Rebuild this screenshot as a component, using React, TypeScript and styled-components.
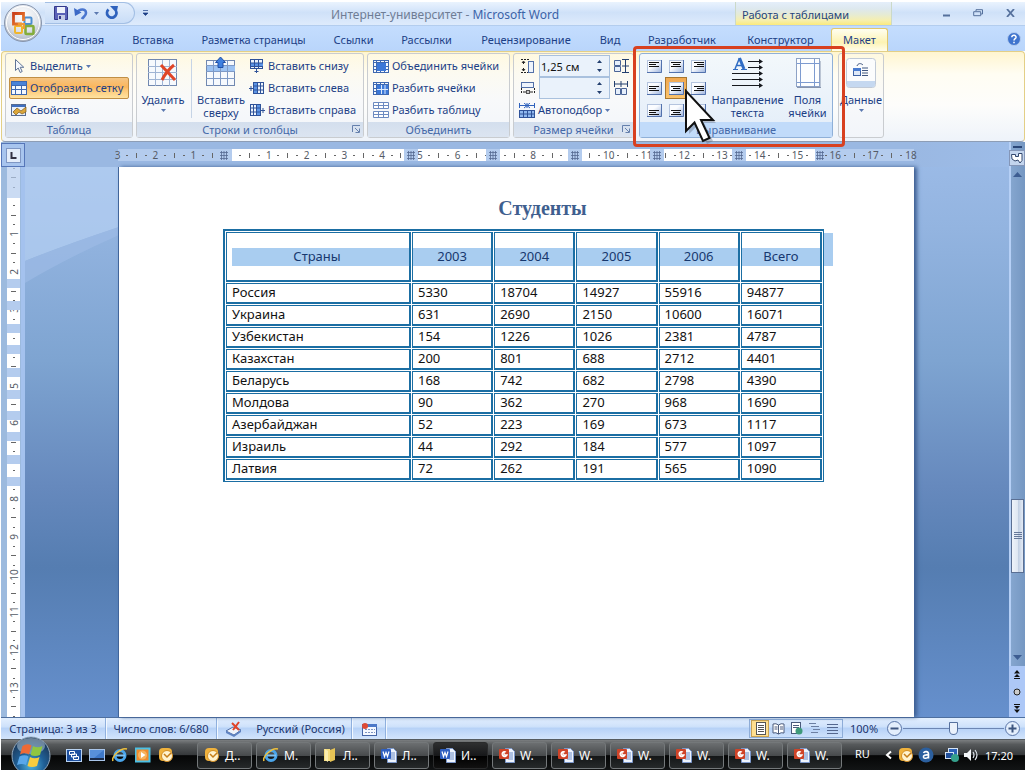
import React from "react";
import styled, { createGlobalStyle, css } from "styled-components";

const ink = "#1c3f86";
const tableLine = "#1b6ea3";
const rulerBlue = "#b4ccee";

const Global = createGlobalStyle`
  * { box-sizing: border-box; }
  body { margin: 0; background: #fff; }
  body, button, input { font-family: "Noto Sans", "Open Sans", sans-serif; font-size: 12px; }
  button { border: 0; background: none; padding: 0; margin: 0; color: inherit; }
  svg { display: block; flex: none; }
`;

/* ---------- frame ---------- */
const Window = styled.div`
  min-height: 100vh; display: flex; flex-direction: column;
  padding: 2px 1px 0; color: ${ink}; overflow: hidden;
`;
const Header = styled.header`position: relative; background: #bfdbff;`;
const TitleBar = styled.div`
  display: flex; height: 24px; padding-left: 44px;
  background: linear-gradient(#eaf3fe 0, #d9e8fb 30%, #cfe1f8 45%, #deebfc 100%);
  border-bottom: 1px solid #b3cdee;
`;
const OfficeButton = styled.button`position: absolute; left: 2px; top: 1px; width: 40px; height: 40px; z-index: 2;`;
const QuickAccess = styled.div`
  display: flex; align-items: center; gap: 6px; width: 90px; height: 22px; padding-left: 9px;
  border: 1px solid #a3bfe4; border-left: 0; border-radius: 0 11px 11px 0;
  background: linear-gradient(#e3eefc, #c9ddf7);
`;
const More = styled.button`width: 20px; height: 22px; display: flex; align-items: center; justify-content: center;`;
const Title = styled.h1`
  flex: 1; margin: 0; text-align: center; font-size: 12px; font-weight: 400; line-height: 26px; color: #3b63a8;
  span { color: #6f7d95; }
`;
const ContextLabel = styled.div`
  width: 157px; line-height: 26px; padding-left: 6px; font-size: 11px; color: #26457c; white-space: nowrap;
  border: solid #cbd9c8; border-width: 0 1px;
  background: linear-gradient(#e4eefa 0, #dde8ee 30%, #e6ebd4 55%, #f6efae 80%, #fbea7c 100%);
`;
const WindowButtons = styled.div`
  display: flex; width: 133px; justify-content: flex-end; padding-right: 5px; gap: 12px;
  button { width: 20px; height: 22px; display: flex; align-items: center; justify-content: center; }
`;
const Tabs = styled.nav`
  display: flex; align-items: flex-end; height: 25px; padding-left: 46px;
  background: linear-gradient(#c4ddfe, #b9d5fb);
`;
const Tab = styled.button<{ $w: number; $active?: boolean }>`
  width: ${p => p.$w}px; height: 23px; line-height: 22px; font-size: 11px; white-space: nowrap; flex: none;
  ${p => p.$active && css`
    margin-left: 1px; border: 1px solid #e0c76c; border-bottom: 0; border-radius: 3px 3px 0 0;
    background: linear-gradient(#fffef0, #fdf3b4 60%, #fffdec);
  `}
`;
const Help = styled.button`margin-left: auto; width: 16px; height: 16px; margin-right: 3px; margin-bottom: 4px;`;

/* ---------- ribbon ---------- */
const Ribbon = styled.div`
  display: flex; gap: 3px; height: 91px; padding: 1px 3px 3px;
  border: 1px solid #e3cf86; border-bottom-color: #8d9db5; border-radius: 4px;
  background: linear-gradient(#fff5cf 0, #fffdf3 25%, #fdfdfb 60%, #eef3fa 100%);
`;
const GroupBox = styled.section<{ $w: number; $hot?: boolean; $lead?: boolean }>`
  position: relative; display: flex; flex-direction: column; flex: none; width: ${p => p.$w}px;
  border: 1px solid ${p => (p.$hot ? "#8fb0d8" : "#c9ccd0")}; border-radius: 3px;
  margin-left: ${p => (p.$lead ? 2 : 0)}px;
  background: ${p => (p.$hot ? "linear-gradient(#f3f8fb, #e3edf9)" : "linear-gradient(rgba(255,250,230,.7), #f8f9fa 55%, #f2f5fa)")};
`;
const GroupBody = styled.div`display: flex; flex: 1; padding: 1px 3px 0; min-height: 0;`;
const Caption = styled.h2<{ $hot?: boolean }>`
  position: relative; margin: 0; height: 15px; line-height: 16px; text-align: center; font-size: 11px; font-weight: 400; color: #4468a8;
  background: ${p => (p.$hot ? "#c1dbfa" : "linear-gradient(#d3deed, #dce5f1)")};
`;
const Launcher = styled.button`position: absolute; right: 2px; top: 3px; width: 9px; height: 9px;`;
const Rows = styled.div<{ $grow?: boolean }>`display: flex; flex-direction: column; flex: ${p => (p.$grow ? 1 : "none")};`;
const SmallButton = styled.button<{ $on?: boolean }>`
  display: flex; align-items: center; gap: 3px; height: 22px; padding: 0 2px; font-size: 11px; line-height: 20px; white-space: nowrap;
  ${p => p.$on && css`
    border: 1px solid #c08f45; border-radius: 2px; padding: 0 1px;
    background: linear-gradient(#f5c584 0, #fbb65c 45%, #fdc878 60%, #ffe3a0 100%);
  `}
`;
const BigButton = styled.button<{ $w: number }>`
  width: ${p => p.$w}px; height: 66px; flex: none; display: flex; flex-direction: column; align-items: center;
  font-size: 11px; line-height: 13px; gap: 3px; padding-top: 1px; white-space: nowrap;
  > svg + span { display: flex; flex-direction: column; align-items: center; }
`;
const Divider = styled.i`width: 1px; margin: 4px 3px 4px 5px; background: #c6d4e6;`;
const Spinner = styled.label`
  display: flex; width: 71px; height: 22px; border: 1px solid #a9c1de; background: #eaf2fb; align-items: center;
  input { width: 52px; border: 0; background: none; padding: 0 0 0 1px; color: #111; font-size: 11px; height: 20px; outline: 0; }
`;
const SizeRow = styled.div`display: flex; align-items: center; gap: 3px; height: 22px; padding-left: 3px;`;
const AlignGrid = styled.div`display: grid; grid-template-columns: repeat(3, 22px); grid-auto-rows: 22px; flex: none;`;
const AlignButton = styled.button<{ $on?: boolean }>`
  display: flex; align-items: center; justify-content: center;
  ${p => p.$on && css`border: 1px solid #a8772f; background: linear-gradient(#f0a850, #fbc36b);`}
`;
const Callout = styled.div`
  position: absolute; z-index: 3; left: -7px; right: -13px; top: -8px; bottom: -10px;
  border: 3px solid #d8401f; border-radius: 4px; pointer-events: none;
`;
const Pointer = styled.svg`position: absolute; z-index: 4; left: 44px; top: 34px; pointer-events: none;`;

/* ---------- document ---------- */
const Workspace = styled.main`display: flex; flex: 1; background: #9dbce6; border-bottom: 1px solid #4e6f9f;`;
const LeftRail = styled.div`width: 24px; display: flex; flex-direction: column; background: linear-gradient(90deg, #9cbade 20px, #a4c2ee 20px);`;
const TabStop = styled.button`
  height: 24px; margin-top: 1px; border: 1px solid #5576b8; background: #a8c5ee; flex: none;
  display: flex; align-items: center; justify-content: center;
`;
const VRuler = styled.div`position: relative; flex: 1; width: 13px; margin-left: 6px; background: #fff; overflow: hidden;`;
const VScale = styled.div`position: absolute; inset: -13px 0 -4px; display: flex; flex-direction: column;`;
const HRulerBar = styled.div`
  display: flex; justify-content: center; height: 25px; padding: 7px 2px 0 0;
  background: linear-gradient(90deg, #9ab8e2 90%, #9dbce8);
`;
const HRuler = styled.div`position: relative; width: 796px; height: 12px; background: #fff;`;
const HScale = styled.div`position: relative; display: flex; margin: 0 -2px 0 -5px;`;
const Unit = styled.div<{ $v?: boolean; $end?: boolean }>`
  flex: ${p => (p.$end ? "0 0 10px" : "1 1 0")}; min-width: 0; display: flex; flex-direction: ${p => (p.$v ? "column" : "row")};
  font-size: 10px; line-height: 12px; color: #555b66;
  > span { flex: 1 1 0; min-width: 0; min-height: 0; display: flex; align-items: center; justify-content: center; }
  b { font-weight: 400; white-space: nowrap; ${p => p.$v && "transform: rotate(-90deg);"} }
  i { background: #666; }
  .dot { width: 2px; height: 1px; }
  .bar { ${p => (p.$v ? "width: 5px; height: 1px;" : "width: 1px; height: 5px;")} }
`;
const Zone = styled.div`position: absolute; background: ${rulerBlue}; display: flex; align-items: center; justify-content: center;`;
const Desk = styled.div`
  position: relative; flex: 1; min-width: 0; display: flex; flex-direction: column;
  background: linear-gradient(#9dbce8 0, #93b4e0 15%, #7ea4d1 38%, #6689bd 60%, #557db1 74%, #6690cd 100%);
`;
const Sweep = styled.svg`position: absolute; left: 0; top: 25px;`;
const PageRow = styled.div`position: relative; flex: 1; display: flex; justify-content: center; padding-right: 2px;`;
const Page = styled.article`
  width: 796px; background: #fff; padding: 30px 90px 40px 104px; border-left: 1px solid #41659b;
  box-shadow: 3px 0 4px #3e5f92;
`;
const Heading = styled.h2`
  margin: 0 0 10px; padding-left: 38px; text-align: center; height: 22px;
  font: 700 20px/22px "Liberation Serif", serif; color: #3f5f8f;
`;
const TableWrap = styled.div`position: relative; width: 601px;`;
const Data = styled.table`
  width: 100%; table-layout: fixed; border-collapse: separate; border-spacing: 1px;
  border: 2px solid ${tableLine}; border-right-width: 1px; border-bottom-width: 1px;
  font-size: 13px; color: #111;
  th, td { border: 1px solid ${tableLine}; border-right-width: 2px; border-bottom-width: 2px; padding: 0; font-weight: 400; }
  th { height: 50px; color: #17386e; }
  th span { display: block; height: 18px; line-height: 17px; background: #a9cdf0; }
  th:first-child span { margin-left: 5px; padding-right: 7px; }
  td { height: 21px; line-height: 17px; padding-left: 5px; padding-bottom: 1px; text-align: left; }
  col:first-child { width: 185px; }
`;
const RowEndMark = styled.div`position: absolute; left: 601px; top: 4px; width: 9px; height: 33px; background: #a9cdf0;`;

const ScrollRail = styled.aside`
  width: 16px; display: flex; flex-direction: column; background: linear-gradient(90deg, #b6d0f6 2px, #85a6cf 2px, #7597c2);
  padding-top: 4px;
`;
const Split = styled.i`height: 2px; width: 9px; background: #2b4778; margin: 0 4px 2px;`;
const RulerToggle = styled.button`height: 16px; background: #c3d5ee; border: 1px solid #8496b8; display: flex; align-items: center; justify-content: center;`;
const Arrow = styled.button`height: 17px; display: flex; align-items: center; justify-content: center;`;
const Track = styled.i<{ $f: number }>`flex: ${p => p.$f} 0 0;`;
const Thumb = styled.div`
  height: 74px; margin: 0 1px 0 2px; border: 1px solid #5a6f93; background: linear-gradient(90deg, #eef3fa, #dfe7f2 50%, #c0cee2 55%, #e4ebf5);
  display: flex; align-items: center; justify-content: center;
`;
const Browse = styled.div`
  height: 51px; background: #adc8f7; display: flex; flex-direction: column; justify-content: space-around; align-items: center;
  button { width: 15px; height: 15px; display: flex; align-items: center; justify-content: center; }
`;

/* ---------- status bar ---------- */
const Status = styled.footer`
  display: flex; align-items: center; height: 21px; font-size: 11px; color: #20356e; white-space: nowrap;
  background: linear-gradient(#e3effe 0, #cfe2fb 40%, #b7d2f7 50%, #d2e4fc 100%);
`;
const StatusItem = styled.button<{ $w: number; $line?: boolean }>`
  width: ${p => p.$w}px; height: 21px; display: flex; align-items: center; justify-content: center; font-size: 11px;
  ${p => p.$line && "border-right: 1px solid #8fb0de; box-shadow: 1px 0 #f2f8ff;"}
`;
const Views = styled.div`
  display: flex; margin-left: auto; width: 94px; height: 19px; border: 1px solid #8eadd8; padding: 0 1px;
  button { width: 18px; height: 17px; display: flex; align-items: center; justify-content: center; }
  button:first-child { background: #ffdf90; border: 1px solid #c9a252; }
`;
const ZoomBox = styled.div`
  display: flex; align-items: center; width: 182px; padding-left: 7px;
  span { width: 36px; }
  input {
    appearance: none; width: 101px; height: 18px; margin: 0; background: linear-gradient(#6d86b3, #6d86b3) center / 100% 1px no-repeat;
  }
  input::-webkit-slider-thumb {
    appearance: none; width: 9px; height: 13px; border: 1px solid #56719f; background: #eaf1fb;
    border-radius: 1px 1px 5px 5px;
  }
`;
const RoundButton = styled.button`width: 17px; height: 17px;`;

/* ---------- taskbar ---------- */
const Taskbar = styled.footer`
  position: relative; display: flex; align-items: center; height: 31px; padding-left: 65px; color: #fff;
  background: linear-gradient(#7b7e80 0, #56595b 15%, #35383a 50%, #050606 52%, #121415 100%);
  border-top: 1px solid #555b60;
`;
const Orb = styled.button`position: absolute; left: 9px; top: -4px; width: 42px; height: 34px; overflow: hidden;`;
const Launch = styled.div`display: flex; gap: 7px; width: 131px; button { width: 16px; height: 16px; }`;
const TaskList = styled.div`display: flex; gap: 4px;`;
const Task = styled.button<{ $on?: boolean }>`
  display: flex; align-items: center; gap: 5px; width: 55px; height: 27px; padding-left: 6px; font-size: 12px; white-space: nowrap;
  border: 1px solid ${p => (p.$on ? "#2a2b2c" : "#74787a")}; border-radius: 3px;
  background: ${p => (p.$on
    ? "linear-gradient(#2e2f30, #17181a 50%, #000 52%, #111)"
    : "linear-gradient(#6c6f71, #484b4d 50%, #141617 52%, #26292a)")};
`;
const Tray = styled.div`
  display: flex; align-items: center; margin-left: auto; padding-right: 12px; white-space: nowrap; font-size: 11px;
  span, time, button { flex: none; }
`;
const TrayIcon = styled.button<{ $ml: number }>`margin-left: ${p => p.$ml}px; width: 16px; height: 16px;`;
const Lang = styled.span`padding-bottom: 4px;`;
const Clock = styled.time`margin-left: 6px;`;

/* ---------- drawings ---------- */
const Caret = ({ c = "#5c79b0" }) => <svg width="5" height="3"><path d="M0 0h5L2.5 3z" fill={c} /></svg>;

const Grid = ({ w = 15, h = 14, cols = 3, rows = 3, fill = "#f4f8fd", line = "#3e68b0", children }: any) => (
  <svg width={w} height={h}>
    <rect x=".5" y=".5" width={w - 1} height={h - 1} fill={fill} stroke={line} />
    {Array.from({ length: cols - 1 }, (_, i) => <path key={"c" + i} d={`M${Math.round(((i + 1) * w) / cols) - 0.5} 0V${h}`} stroke={line} />)}
    {Array.from({ length: rows - 1 }, (_, i) => <path key={"r" + i} d={`M0 ${Math.round(((i + 1) * h) / rows) - 0.5}H${w}`} stroke={line} />)}
    {children}
  </svg>
);

const OfficeLogo = () => (
  <svg width="40" height="40">
    <defs>
      <radialGradient id="ob" cx=".5" cy=".3" r=".7"><stop offset="0" stopColor="#fff" /><stop offset=".6" stopColor="#dfe3ea" /><stop offset="1" stopColor="#a9b2c1" /></radialGradient>
      <linearGradient id="or" x1="0" y1="0" x2="1" y2="1"><stop offset="0" stopColor="#c93f1c" /><stop offset="1" stopColor="#f08a32" /></linearGradient>
    </defs>
    <circle cx="20" cy="20" r="18.5" fill="url(#ob)" stroke="#8795ad" />
    <circle cx="20" cy="20" r="16.5" fill="none" stroke="#fff" />
    <g fill="none">
      <rect x="21.500" y="14.500" width="7" height="6.500" rx="1" stroke="#4c8ed0" strokeWidth="2" />
      <rect x="12" y="23" width="7" height="7" rx="1" stroke="#f0b62c" strokeWidth="2" />
      <rect x="22.500" y="23" width="8" height="8" rx="1" stroke="#84ad3b" strokeWidth="2.600" />
      <path d="M19 21H10.500V10.500H20.500V18" stroke="url(#or)" strokeWidth="2.800" />
      <path d="M15 21h6v5" stroke="#ef9a38" strokeWidth="2" />
    </g>
  </svg>
);
const Save = () => (
  <svg width="14" height="14"><path d="M.5.500h12l1 1v12H.5z" fill="#5b62b8" stroke="#33388a" /><path d="M3 1h8v6H3z" fill="#eef2fb" /><path d="M4 9h7v5H4z" fill="#c3cbe6" /><path d="M5 10h2v3H5z" fill="#33388a" /></svg>
);
const Undo = () => (
  <svg width="14" height="13"><path d="M3 5.500C5 2 12 1 12 6c0 3-3 4-4 6" fill="none" stroke="#4a76cf" strokeWidth="2.600" /><path d="M0 1l1 8 6.500-3.500z" fill="#3c69c6" /></svg>
);
const Redo = () => (
  <svg width="14" height="14"><path d="M3.500 3.500A4.700 4.700 0 1 0 11 5" fill="none" stroke="#2f62bd" strokeWidth="2.800" /><path d="M5 0h8l-1.500 7z" fill="#2f62bd" /></svg>
);
const Cursor = () => (
  <svg width="16" height="16"><path d="M4.500 1.500v11l2.700-2.500 2 4.500 2-1-2-4.200h3.600z" fill="#f5f8fd" stroke="#5f7396" /></svg>
);
const Props = () => (
  <svg width="16" height="14"><rect x=".5" y="1.500" width="14" height="11" fill="#e9f0fa" stroke="#556b92" /><path d="M1 2h13v2H1z" fill="#3f6fc0" /><path d="M2 9l4-4 4 3 5-4v5l-4 2-3-2-3 3z" fill="#dba63a" stroke="#7c5a1c" strokeWidth=".7" /></svg>
);
const DeleteIcon = () => (
  <svg width="30" height="34">
    <rect x=".5" y="3.500" width="28" height="26" fill="#f6f9fd" stroke="#7188b0" />
    <path d="M7.500 4v26M14.500 4v26M21.500 4v26M0 10.500h29M0 16.500h29M0 23.500h29" stroke="#9fb4d4" />
    <path d="M13 9l14 15M26 9c-5 4-9 9-12 15" fill="none" stroke="#e04527" strokeWidth="3" />
  </svg>
);
const InsertAbove = () => (
  <svg width="30" height="34">
    <rect x=".5" y="4.500" width="28" height="25" fill="#f6f9fd" stroke="#7188b0" /><path d="M1 9h28v6H1z" fill="#9cc2f2" />
    <path d="M7.500 5v25M14.500 5v25M21.500 5v25M0 9.500h29M0 15.500h29M0 22.500h29" stroke="#7f9ac6" />
    <path d="M14.500 1l5 5.500h-2.500v5h-5v-5H9.500z" fill="#3f80e0" stroke="#1e4fa8" />
  </svg>
);
const InsertIcon = ({ kind }: { kind: "b" | "l" | "r" }) => (
  <svg width="16" height="16">
    {kind === "b" ? (
      <><rect x="1.500" y="1.500" width="12" height="9" fill="#eef4fc" stroke="#2f5299" /><path d="M2 5h12v4H2z" fill="#5d95e6" /><path d="M5.500 1v10M9.500 1v10M1 5h13M1 8.500h13M7.500 11v4M5.500 13.500h4" stroke="#2f5299" /></>
    ) : (
      <g transform={kind === "r" ? "translate(16 0) scale(-1 1)" : undefined}>
        <rect x="4.500" y="2.500" width="10" height="11" fill="#eef4fc" stroke="#2f5299" /><path d="M5 3h4v10H5z" fill="#5d95e6" /><path d="M8.500 2v12M11.500 2v12M4 6h11M4 10h11M0 8.500h4M2 6v5" stroke="#2f5299" />
      </g>
    )}
  </svg>
);
const MergeIcon = () => <Grid w={16} h={13} cols={4} rows={4}><path d="M4 3h9v8H4z" fill="#3c78d8" /></Grid>;
const SplitCells = () => <Grid w={16} h={13} cols={4} rows={4}><path d="M4 3h11v9H4z" fill="#3c78d8" /><path d="M8.500 3v9M12 3v9M4 7.500h11" stroke="#dce9fb" /></Grid>;
const SplitTable = () => (
  <svg width="16" height="16"><path d="M.5.500h15v6H.5zM.5 9.500h15v6H.5zM5.500 0v7M10.500 0v7M0 3.500h16M5.500 9v7M10.500 9v7M0 12.500h16" fill="#fff" stroke="#6c8ac0" /></svg>
);
const HeightIcon = () => (
  <svg width="16" height="16"><path d="M1 1.500h8M1 14.500h8" stroke="#222" strokeDasharray="2 1" /><path d="M3.500 4v2M3.500 10v3M2 5l1.500-2L5 5M2 11l1.500 2L5 11" stroke="#222" fill="none" /><rect x="8.500" y="3.500" width="5" height="11" fill="#eef4fc" stroke="#5270a8" /></svg>
);
const WidthIcon = () => (
  <svg width="16" height="16"><rect x="1.500" y="2.500" width="12" height="5" fill="#eef4fc" stroke="#5270a8" /><path d="M1.500 8v6M14.500 8v6" stroke="#222" strokeDasharray="2 1" /><path d="M3 12h3M10 12h3" stroke="#222" /><rect x="6.500" y="10.500" width="3" height="3" fill="#ccc" stroke="#555" /></svg>
);
const AutoFit = () => (
  <svg width="16" height="15"><path d="M0 2.500h16M.5 0v5M15.500 0v5M8 0v5M5 0l6 5M11 0L5 5" stroke="#2f62bd" /><rect x=".5" y="7.500" width="15" height="7" fill="#8fb7ee" stroke="#2f5299" /><path d="M4.500 7v8M8.500 7v8M12.500 7v8M0 11h16" stroke="#2f5299" /></svg>
);
const DistRows = () => (
  <svg width="16" height="16"><path d="M1.500 2.500h6v5h-6zM1.500 8.500h6v5h-6z" fill="#e6effb" stroke="#4a6496" /><path d="M9 1.500h7M9 8h7M9 14.500h7M12.500 2v12" stroke="#24406f" /></svg>
);
const DistCols = () => (
  <svg width="16" height="16"><path d="M2.500 8.500h5v6h-5zM8.500 8.500h5v6h-5z" fill="#e6effb" stroke="#4a6496" /><path d="M1.500 1v6M8 1v6M14.500 1v6M1 4h14" stroke="#24406f" /></svg>
);
const Steps = () => <svg width="14" height="16"><path d="M5 5h5L7.500 2zM5 11h5L7.500 14z" fill="#24406f" /></svg>;
const LauncherIcon = () => <svg width="9" height="9"><path d="M.5 7V.5H8M3 3l4 4M7.500 3.500v4h-4" fill="none" stroke="#6580ad" /></svg>;

const AlignIcon = ({ h, v }: { h: number; v: number }) => {
  const y0 = [2, 4, 6][v];
  return (
    <svg width="15" height="13">
      <defs><linearGradient id="al" x1="0" y1="0" x2="1" y2="1"><stop offset=".4" stopColor="#fafcff" /><stop offset="1" stopColor="#9db3dc" /></linearGradient></defs>
      <rect x=".5" y=".5" width="14" height="12" fill="url(#al)" stroke="#b4c4de" /><path d="M0 12.500h14.500V0" fill="none" stroke="#5272ad" />
      {[10, 7, 10].map((len, i) => (
        <path key={i} d={`M${h === 0 ? 2 : h === 1 ? Math.floor((15 - len) / 2) : 13 - len} ${y0 + i * 2 + 0.5}h${len}`} stroke="#111" />
      ))}
    </svg>
  );
};
const DirectionIcon = () => (
  <svg width="32" height="34">
    <path d="M7.500 2l4.500 11" stroke="#2f6cc4" strokeWidth="3" /><path d="M7.500 2L3 13M4.500 9.500h6" fill="none" stroke="#2f6cc4" strokeWidth="1.500" /><path d="M1 13.500h5M9 13.500h6" stroke="#2f6cc4" />
    <path d="M16 5.500h14M16 11.500h14M0 17.500h30M0 23.500h30M0 29.500h30" stroke="#15181d" />
    <path d="M27 3l4 2.500-4 2.500zM27 9l4 2.500-4 2.500zM27 15l4 2.500-4 2.500zM27 21l4 2.500-4 2.500zM27 27l4 2.500-4 2.500z" fill="#15181d" />
  </svg>
);
const MarginsIcon = () => (
  <svg width="26" height="34"><rect x="1.500" y="2.500" width="23" height="28" fill="#fdfeff" stroke="#8da2c6" /><path d="M5.500 3v28M19.500 3v28M2 7.500h23M2 26.500h23" stroke="#7d9bd0" /><path d="M2 31.500h24V5" stroke="#8794ad" fill="none" /></svg>
);
const DataIcon = () => (
  <svg width="32" height="34">
    <rect x="1.500" y="2.500" width="29" height="29" rx="3" fill="#fbfcfd" stroke="#c1cad7" /><path d="M2 25h28v4q0 2-2 2H4q-2 0-2-2z" fill="#c5d8f0" />
    <rect x="8.500" y="12.500" width="7" height="7" fill="#dfe9f8" stroke="#3f63a5" /><path d="M8 12h8v3H8z" fill="#4a7cd0" /><path d="M12 10c1-3 4-3 6-1M17 12h6M17 14.500h6M17 17h6M17 19.500h6" stroke="#41567f" fill="none" />
  </svg>
);
const Hatch = () => <svg width="8" height="9"><path d="M0 1.500h8M0 4.500h8M0 7.500h8M1.500 0v9M4 0v9M6.500 0v9" stroke="#566a92" strokeWidth=".8" /></svg>;
const OutlookIcon = ({ s = 16 }) => (
  <svg width={s} height={s} viewBox="0 0 16 16"><rect x="1" y="1" width="13" height="13" rx="4" fill="#f0b23c" /><circle cx="9" cy="9" r="5.500" fill="#fff3cf" stroke="#d58f22" /><path d="M6 7l3 3 4-4" fill="none" stroke="#c57d18" strokeWidth="1.500" /></svg>
);
const IEIcon = () => (
  <svg width="16" height="16"><circle cx="8" cy="8.500" r="5" fill="none" stroke="#4aa5ea" strokeWidth="3" /><path d="M4 8.500h9" stroke="#7cc2f4" strokeWidth="2" /><path d="M1 14C-1 10 9 0 15 2" fill="none" stroke="#f0c23c" strokeWidth="1.500" /></svg>
);
const WinIcon = () => <svg width="16" height="16"><rect x=".5" y="2.500" width="15" height="12" fill="#1d4f9e" stroke="#b9d3f2" /><path d="M3.500 4.500h5v3h-5zM5.500 7h5v3h-5zM7.500 9.500h5v3h-5z" fill="#1d4f9e" stroke="#fff" /></svg>;
const DeskIcon = () => <svg width="16" height="16"><rect x=".5" y="2.500" width="15" height="11" fill="#3e78c8" stroke="#a9c5ea" /><path d="M1 11h14v2H1z" fill="#1b2c4a" /><path d="M1 3h14L5 11H1z" fill="#6ba0e4" opacity=".6" /></svg>;
const PlayIcon = () => <svg width="16" height="16"><rect x=".5" y="1.500" width="14" height="13" fill="#f08a2a" stroke="#4cc1e6" strokeWidth="2" /><circle cx="7.500" cy="8" r="4.500" fill="#f7b35e" /><path d="M6 5l4.500 3L6 11z" fill="#fff" /></svg>;
const FolderIcon = () => <svg width="16" height="16"><path d="M2 2h6v12H2z" fill="#f4dc7e" /><path d="M8 3l5-2v12l-5 2z" fill="#e7c455" /><path d="M3 2l3 2v11l-3-2z" fill="#fbeeb0" /></svg>;
const DocIcon = ({ c }: { c: string }) => (
  <svg width="16" height="16"><path d="M6.500 1.500h6l3 3v11h-9z" fill="#eef4fd" stroke="#7c98cc" /><path d="M9 6h5M9 8h5M9 10h5M9 12h5" stroke="#6d8cc6" /><rect y="2" width="10" height="10" rx="1" fill={c} />
    {c === "#2f5fc0" ? <path d="M2 4.500l1.500 5 1.500-4 1.500 4 1.500-5" fill="none" stroke="#fff" strokeWidth="1.200" /> : <path d="M7 5a2.500 2.500 0 1 0 1 3H5V4.500" fill="none" stroke="#fff" strokeWidth="1.400" />}
  </svg>
);
const StartOrb = () => (
  <svg width="42" height="42" viewBox="0 0 42 42">
    <defs><radialGradient id="so" cx=".5" cy=".75" r=".7"><stop offset="0" stopColor="#4fb3de" /><stop offset=".5" stopColor="#1f5f96" /><stop offset="1" stopColor="#1c3655" /></radialGradient></defs>
    <circle cx="21" cy="20" r="19" fill="url(#so)" stroke="#93aabf" /><ellipse cx="21" cy="10" rx="14" ry="8" fill="#cfe0ee" opacity=".45" />
    <path d="M12.500 10q4.500-3 9-.5l-2.500 9q-4-2.500-9 0z" fill="#ee6a36" /><path d="M23 10q4.500 2.500 9.500 0l-2.500 9q-5 2-9.500 0z" fill="#8fc640" />
    <path d="M9.500 20.500q5-2.500 9 0l-2.500 8.500q-4-2-9 0z" fill="#59a7ea" /><path d="M20 21q4.500 2.500 9.500 0l-2.500 9q-5 2-9.500 0z" fill="#f8cc3e" />
  </svg>
);
const ProofIcon = () => <svg width="18" height="16"><path d="M1 10l7-4 8 3-7 5z" fill="#eef3fb" stroke="#4f6da5" /><path d="M1 10v2l8 4 7-5V9l-7 5z" fill="#5f83c2" /><path d="M7 2l7 7M14 1L8 9" stroke="#e0442a" strokeWidth="2" /></svg>;
const MacroIcon = () => <svg width="16" height="14"><rect x="1.500" y="2.500" width="14" height="11" fill="#f4f8ff" stroke="#4565a6" /><path d="M5 2h11v3H5z" fill="#4c78c8" /><path d="M4 7.500h10M4 10.500h10" stroke="#7d94c2" strokeDasharray="2 1" /><circle cx="4" cy="4" r="3" fill="#de4a35" /></svg>;
const ViewIcon = ({ k }: { k: number }) => (
  <svg width="13" height="13">
    {k === 0 && <><rect x="2.500" y=".5" width="9" height="12" fill="#fff" stroke="#555" /><path d="M4 3.500h6M4 5.500h6M4 7.500h6M4 9.500h6" stroke="#555" /></>}
    {k === 1 && <><path d="M1 2q3-1 5.500 1Q9 1 12 2v9q-3-1-5.500 1Q4 10 1 11z" fill="#fff" stroke="#4b5b7c" /><path d="M6.500 3v9M2.500 5h3M2.500 7h3M8 5h3M8 7h3" stroke="#4b5b7c" /></>}
    {k === 2 && <><rect x="1.500" y=".5" width="9" height="11" fill="#fff" stroke="#4b5b7c" /><path d="M3 3.500h6M3 5.500h6" stroke="#4b5b7c" /><circle cx="9" cy="9" r="3.500" fill="#3f9a7a" /></>}
    {k === 3 && <path d="M1 1.500h7M3 4.500h8M5 7.500h7M3 10.500h7" stroke="#6c7fa2" />}
    {k === 4 && <path d="M1 2.500h11M1 5.500h11M1 8.500h11M1 11.500h11" stroke="#54678e" />}
  </svg>
);
const Round = ({ plus }: { plus?: boolean }) => <svg width="17" height="17"><circle cx="8.500" cy="8.500" r="7" fill="#e3eefc" stroke="#5b76a8" /><path d={plus ? "M4.500 8.500h8M8.500 4.500v8" : "M4.500 8.500h8"} stroke="#3d557f" strokeWidth="2" /></svg>;
const Page2 = ({ up }: { up?: boolean }) => <svg width="8" height="9"><g transform={up ? undefined : "translate(0 9) scale(1 -1)"}><path d="M4 0l3 3.500H1zM4 4l3 3H1z" fill="#111" /><path d="M1 8.500h6" stroke="#111" /></g></svg>;

/* ---------- data ---------- */
const tabs: [string, number][] = [["Главная", 71], ["Вставка", 70], ["Разметка страницы", 131], ["Ссылки", 69], ["Рассылки", 77], ["Рецензирование", 122], ["Вид", 46], ["Разработчик", 98], ["Конструктор", 99]];
const years = ["2003", "2004", "2005", "2006", "Всего"];
const students = [
  ["Россия", 5330, 18704, 14927, 55916, 94877], ["Украина", 631, 2690, 2150, 10600, 16071], ["Узбекистан", 154, 1226, 1026, 2381, 4787],
  ["Казахстан", 200, 801, 688, 2712, 4401], ["Беларусь", 168, 742, 682, 2798, 4390], ["Молдова", 90, 362, 270, 968, 1690],
  ["Азербайджан", 52, 223, 169, 673, 1117], ["Израиль", 44, 292, 184, 577, 1097], ["Латвия", 72, 262, 191, 565, 1090],
];
const columnMarks = [286, 368, 450, 532, 614];
const rowMarks = [112, 134, 157, 178, 201, 223, 244, 265, 288, 310];
const tasks: [string, React.ReactNode][] = [
  ["Д..", <OutlookIcon />], ["М.", <IEIcon />], ["Л..", <FolderIcon />], ["Л..", <DocIcon c="#2f5fc0" />], ["И..", <DocIcon c="#2f5fc0" />],
  ...Array.from({ length: 6 }, () => ["W.", <DocIcon c="#cf4328" />] as [string, React.ReactNode]),
];

const RulerUnit = ({ label, vertical }: { label: string; vertical?: boolean }) => (
  <Unit $v={vertical}>
    <span><b>{label}</b></span><span><i className="dot" /></span><span><i className="bar" /></span><span><i className="dot" /></span>
  </Unit>
);
const Group = ({ title, w, hot, lead, launcher, children, overlay }: any) => (
  <GroupBox $w={w} $hot={hot} $lead={lead}>
    <GroupBody>{children}</GroupBody>
    {title && <Caption $hot={hot}>{title}{launcher && <Launcher aria-label={title}><LauncherIcon /></Launcher>}</Caption>}
    {overlay}
  </GroupBox>
);

export default function App() {
  return (
    <Window>
      <Global />
      <Header>
        <OfficeButton aria-label="Office"><OfficeLogo /></OfficeButton>
        <TitleBar>
          <QuickAccess>
            <button aria-label="Сохранить"><Save /></button>
            <button aria-label="Отменить"><Undo /></button>
            <Caret />
            <button aria-label="Повторить"><Redo /></button>
          </QuickAccess>
          <More aria-label="Настройка панели"><svg width="7" height="6"><path d="M1 .5h5M1 3h5L3.500 5.500z" fill={ink} stroke={ink} strokeWidth=".7" /></svg></More>
          <Title><span>Интернет-университет - </span>Microsoft Word</Title>
          <ContextLabel>Работа с таблицами</ContextLabel>
          <WindowButtons>
            <button aria-label="Свернуть"><svg width="9" height="8"><path d="M1 6.500h7" stroke="#55709c" strokeWidth="2" /></svg></button>
            <button aria-label="Развернуть"><svg width="10" height="9"><path d="M3 2V.7h6.500V5H8M.7 2.700h7v4h-7z" fill="none" stroke="#55709c" /></svg></button>
            <button aria-label="Закрыть"><svg width="9" height="8"><path d="M1 0l7 8M8 0L1 8" stroke="#55709c" strokeWidth="1.800" /></svg></button>
          </WindowButtons>
        </TitleBar>
        <Tabs>
          {tabs.map(([t, w]) => <Tab key={t} $w={w}>{t}</Tab>)}
          <Tab $w={57} $active>Макет</Tab>
          <Help aria-label="Справка"><svg width="16" height="16"><circle cx="8" cy="8" r="6.500" fill="#3f74ce" stroke="#b5cdf0" /><path d="M5.800 6.200C6 3.500 10.500 3.800 10 6.500 9.700 7.700 8 7.800 8 9.500M8 10.800v1.400" stroke="#fff" fill="none" strokeWidth="1.500" /></svg></Help>
        </Tabs>
      </Header>

      <Ribbon>
        <Group title="Таблица" w={128}>
          <Rows $grow>
            <SmallButton><Cursor />Выделить <Caret /></SmallButton>
            <SmallButton $on><Grid w={16} h={14}><path d="M1 1h14v3H1z" fill="#4a83d8" /></Grid>Отобразить сетку</SmallButton>
            <SmallButton><Props />Свойства</SmallButton>
          </Rows>
        </Group>
        <Group title="Строки и столбцы" w={228} launcher>
          <BigButton $w={46}><DeleteIcon /><span>Удалить</span><Caret /></BigButton>
          <Divider />
          <BigButton $w={52}><InsertAbove /><span><span>Вставить</span><span>сверху</span></span></BigButton>
          <Rows>
            <SmallButton><InsertIcon kind="b" />Вставить снизу</SmallButton>
            <SmallButton><InsertIcon kind="l" />Вставить слева</SmallButton>
            <SmallButton><InsertIcon kind="r" />Вставить справа</SmallButton>
          </Rows>
        </Group>
        <Group title="Объединить" w={143}>
          <Rows>
            <SmallButton><MergeIcon />Объединить ячейки</SmallButton>
            <SmallButton><SplitCells />Разбить ячейки</SmallButton>
            <SmallButton><SplitTable />Разбить таблицу</SmallButton>
          </Rows>
        </Group>
        <Group title="Размер ячейки" w={121} launcher>
          <Rows>
            <SizeRow><HeightIcon /><Spinner><input aria-label="Высота" defaultValue="1,25 см" /><Steps /></Spinner><DistRows /></SizeRow>
            <SizeRow><WidthIcon /><Spinner><input aria-label="Ширина" defaultValue="" /><Steps /></Spinner><DistCols /></SizeRow>
            <SmallButton><AutoFit />Автоподбор <Caret /></SmallButton>
          </Rows>
        </Group>
        <Group title="Выравнивание" w={194} hot lead overlay={
          <>
            <Callout />
            <Pointer width="34" height="58" viewBox="0 0 34 58">
              <path d="M5 6v40l9-9 9 19 6-3-9-18h12z" fill="#5a6273" opacity=".35" />
              <path d="M2 3v40l8.500-8.500L19 53l6.500-3-8.500-18h12z" fill="#fff" stroke="#111" strokeWidth="2" />
            </Pointer>
          </>
        }>
          <AlignGrid>
            {[0, 1, 2].map(v => [0, 1, 2].map(h => (
              <AlignButton key={`${v}${h}`} $on={v === 1 && h === 1} aria-label={`Выравнивание ${v * 3 + h + 1}`}><AlignIcon h={h} v={v} /></AlignButton>
            )))}
          </AlignGrid>
          <BigButton $w={77}><DirectionIcon /><span><span>Направление</span><span>текста</span></span></BigButton>
          <BigButton $w={43}><MarginsIcon /><span><span>Поля</span><span>ячейки</span></span></BigButton>
        </Group>
        <Group w={46} lead><BigButton $w={38}><DataIcon /><span>Данные</span><Caret /></BigButton></Group>
      </Ribbon>

      <Workspace>
        <LeftRail>
          <TabStop aria-label="Позиция табуляции"><svg width="15" height="15"><rect x=".5" y=".5" width="14" height="14" fill="#e4edfa" stroke="#7f97c4" /><path d="M5.500 4v6h5" fill="none" stroke="#334" strokeWidth="2" /></svg></TabStop>
          <VRuler>
            <VScale>
              {["", "", "1", "2", "3", "4", "5", "6", "7", "8", "9", "10", "11", "12", "13"].map((l, i) => <RulerUnit key={i} label={l} vertical />)}
            </VScale>
            <Zone style={{ top: 0, left: 0, right: 0, height: 31, opacity: 0.7 }} />
            {rowMarks.map(y => <Zone key={y} style={{ top: y, left: 0, right: 0, height: 9 }} />)}
          </VRuler>
        </LeftRail>
        <Desk>
          <Sweep width="94" height="130" viewBox="0 0 94 130">
            <path d="M0 0h94v60Q40 78 0 94z" fill="#b9d3f5" opacity=".65" /><path d="M0 94q40-16 94-34v8Q40 92 0 116z" fill="#9dbbe6" opacity=".7" />
          </Sweep>
          <HRulerBar>
            <HRuler>
              <Zone style={{ left: 0, top: 0, bottom: 0, width: 114 }} />
              <Zone style={{ right: 0, top: 0, bottom: 0, width: 98 }} />
              <HScale>
                {Array.from({ length: 21 }, (_, i) => <RulerUnit key={i} label={i === 3 ? "" : String(Math.abs(i - 3))} />)}
                <Unit $end><span><b>18</b></span></Unit>
              </HScale>
              <Zone style={{ left: 101, top: 0, bottom: 0, width: 10 }}><Hatch /></Zone>
              {columnMarks.map(x => <Zone key={x} style={{ left: x, top: 0, bottom: 0, width: 14 }}><Hatch /></Zone>)}
              <Zone style={{ left: 697, top: 0, bottom: 0, width: 10 }}><Hatch /></Zone>
            </HRuler>
          </HRulerBar>
          <PageRow>
            <Page>
              <Heading>Студенты</Heading>
              <TableWrap>
                <Data>
                  <colgroup><col />{years.map(y => <col key={y} />)}</colgroup>
                  <thead><tr><th><span>Страны</span></th>{years.map(y => <th key={y}><span>{y}</span></th>)}</tr></thead>
                  <tbody>{students.map(r => <tr key={r[0]}>{r.map((c, i) => <td key={i}>{c}</td>)}</tr>)}</tbody>
                </Data>
                <RowEndMark />
              </TableWrap>
            </Page>
          </PageRow>
        </Desk>
        <ScrollRail>
          <Split />
          <RulerToggle aria-label="Линейка"><svg width="12" height="12"><path d="M.5 2.500h4v2h3v-3h3.500v7l-2 2.500-2-3-3 1-3-2z" fill="#fff" stroke="#34496f" /></svg></RulerToggle>
          <Arrow aria-label="Вверх"><svg width="9" height="5"><path d="M0 5h9L4.500 0z" fill="#3d5d92" /></svg></Arrow>
          <Track $f={317} />
          <Thumb><svg width="8" height="8"><path d="M0 .5h8M0 2.500h8M0 4.500h8M0 6.500h8" stroke="#66789a" /></svg></Thumb>
          <Track $f={76} />
          <Arrow aria-label="Вниз"><svg width="9" height="5"><path d="M0 0h9L4.500 5z" fill="#3d5d92" /></svg></Arrow>
          <Browse>
            <button aria-label="Предыдущая страница"><Page2 up /></button>
            <button aria-label="Выбор объекта"><svg width="8" height="8"><circle cx="4" cy="4" r="3" fill="#ccc" stroke="#222" /></svg></button>
            <button aria-label="Следующая страница"><Page2 /></button>
          </Browse>
        </ScrollRail>
      </Workspace>

      <Status>
        <StatusItem $w={105} $line>Страница: 3 из 3</StatusItem>
        <StatusItem $w={111} $line>Число слов: 6/680</StatusItem>
        <StatusItem $w={33} aria-label="Правописание"><ProofIcon /></StatusItem>
        <StatusItem $w={102} $line>Русский (Россия)</StatusItem>
        <StatusItem $w={34} $line aria-label="Макрос"><MacroIcon /></StatusItem>
        <Views>{[0, 1, 2, 3, 4].map(k => <button key={k} aria-label={`Режим ${k + 1}`}><ViewIcon k={k} /></button>)}</Views>
        <ZoomBox>
          <span>100%</span>
          <RoundButton aria-label="Уменьшить"><Round /></RoundButton>
          <input type="range" aria-label="Масштаб" defaultValue={50} />
          <RoundButton aria-label="Увеличить"><Round plus /></RoundButton>
        </ZoomBox>
      </Status>
      <Taskbar>
        <Orb aria-label="Пуск"><StartOrb /></Orb>
        <Launch>
          <button aria-label="Окна"><WinIcon /></button><button aria-label="Рабочий стол"><DeskIcon /></button>
          <button aria-label="Internet Explorer"><IEIcon /></button><button aria-label="Проигрыватель"><PlayIcon /></button><button aria-label="Outlook"><OutlookIcon /></button>
        </Launch>
        <TaskList>{tasks.map(([t, icon], i) => <Task key={i} $on={i === 4}>{icon}{t}</Task>)}</TaskList>
        <Tray>
          <Lang>RU</Lang>
          <TrayIcon $ml={10} aria-label="Показать значки"><svg width="16" height="16"><path d="M11 4.500L7 8l4 3.500" fill="none" stroke="#fff" strokeWidth="2" /></svg></TrayIcon>
          <TrayIcon $ml={2} aria-label="Outlook"><OutlookIcon /></TrayIcon>
          <TrayIcon $ml={4} aria-label="Агент"><svg width="16" height="16"><circle cx="8" cy="8" r="7.500" fill="#2b5f9e" /><path d="M5.500 6c1-2 5-2 5 1v4.500M10.500 8C7 7.500 5 8.500 5.500 10.200 6.200 12 9.500 11.500 10.500 9.500" fill="none" stroke="#fff" strokeWidth="1.600" /></svg></TrayIcon>
          <TrayIcon $ml={10} aria-label="Сеть"><svg width="16" height="16"><rect x="4.500" y="1.500" width="9" height="7" fill="#2b62b8" stroke="#d5e3f5" /><rect x="1.500" y="5.500" width="8" height="6" fill="#1f4f9c" stroke="#d5e3f5" /><circle cx="11" cy="11" r="4" fill="#35a08c" /></svg></TrayIcon>
          <TrayIcon $ml={3} aria-label="Громкость"><svg width="16" height="16"><path d="M1 6h3l4-4v12l-4-4H1z" fill="#f3f6f9" /><path d="M10 5q2 3 0 6M12 3q4 5 0 10" fill="none" stroke="#dfe6ee" strokeWidth="1.200" /></svg></TrayIcon>
          <Clock>17:20</Clock>
        </Tray>
      </Taskbar>
    </Window>
  );
}
